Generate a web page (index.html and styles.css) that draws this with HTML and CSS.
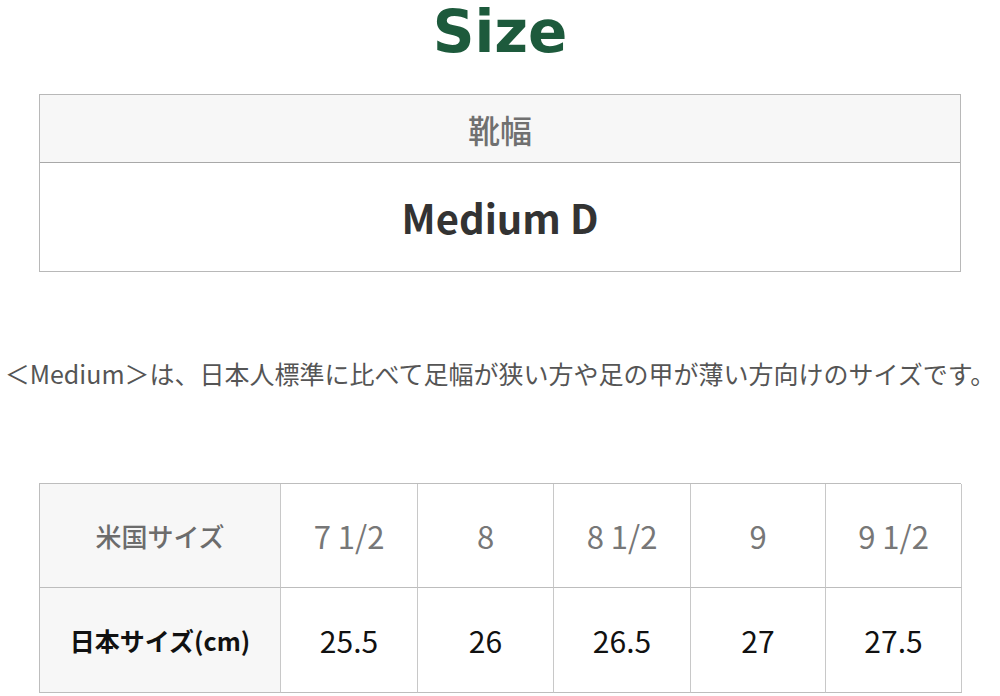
FILE: index.html
```html
<!DOCTYPE html>
<html lang="ja">
<head>
<meta charset="utf-8">
<link rel="stylesheet" href="styles.css">
</head>
<body>
<div class="page">
  <h1 class="title">Size</h1>
  <div class="width-box">
    <div class="width-head">靴幅</div>
    <div class="width-body">Medium D</div>
  </div>
  <p class="note">＜Medium＞は、日本人標準に比べて足幅が狭い方や足の甲が薄い方向けのサイズです。</p>
  <div class="size-grid">
    <div class="cell label us">米国サイズ</div>
    <div class="cell us-val">7 1/2</div>
    <div class="cell us-val">8</div>
    <div class="cell us-val">8 1/2</div>
    <div class="cell us-val">9</div>
    <div class="cell us-val">9 1/2</div>
    <div class="cell label jp">日本サイズ(cm)</div>
    <div class="cell jp-val">25.5</div>
    <div class="cell jp-val">26</div>
    <div class="cell jp-val">26.5</div>
    <div class="cell jp-val">27</div>
    <div class="cell jp-val">27.5</div>
  </div>
</div>
</body>
</html>
```
FILE: styles.css
```css
html, body {
  margin: 0;
  padding: 0;
  background: #fff;
}
body {
  font-family: "Noto Sans CJK JP", "Noto Sans", sans-serif;
  width: 1000px;
  height: 696px;
  overflow: hidden;
}
.page {
  display: flex;
  flex-direction: column;
  align-items: center;
}
.title {
  margin: 0;
  height: 94px;
  font-family: "DejaVu Sans", "Noto Sans", sans-serif;
  font-weight: 700;
  font-size: 58px;
  line-height: 64px;
  color: #1d5a3c;
  box-sizing: border-box;
}
.width-box {
  width: 922px;
  border: 1px solid #b8b8b8;
  box-sizing: border-box;
  display: flex;
  flex-direction: column;
}
.width-head {
  height: 67px;
  background: #f7f7f7;
  border-bottom: 1px solid #a8a8a8;
  display: flex;
  align-items: center;
  justify-content: center;
  font-size: 32px;
  color: #707070;
  font-weight: 500;
}
.width-body {
  height: 108px;
  display: flex;
  align-items: center;
  justify-content: center;
  font-size: 40px;
  font-weight: 700;
  color: #333;
}
.note {
  margin: 0;
  margin-top: 86px;
  width: 1000px;
  white-space: nowrap;
  display: flex;
  justify-content: center;
  font-size: 25px;
  line-height: 30px;
  color: #555;
}
.size-grid {
  margin-top: 95px;
  width: 922px;
  display: grid;
  grid-template-columns: 241px 137px 136px 137px 135px 136px;
  grid-template-rows: 104px 105px;
  border-top: 1px solid #bdbdbd;
  border-left: 1px solid #bdbdbd;
  box-sizing: border-box;
}
.cell {
  border-right: 1px solid #c8c8c8;
  border-bottom: 1px solid #bdbdbd;
  display: flex;
  align-items: center;
  justify-content: center;
  box-sizing: border-box;
}
.label {
  background: #f7f7f7;
}
.us {
  font-size: 26px;
  font-weight: 500;
  color: #6c6c6c;
}
.jp {
  font-size: 25px;
  font-weight: 700;
  color: #111;
}
.us-val {
  font-size: 31px;
  color: #777;
  font-weight: 400;
}
.jp-val {
  font-size: 30px;
  color: #111;
  font-weight: 400;
}
```
